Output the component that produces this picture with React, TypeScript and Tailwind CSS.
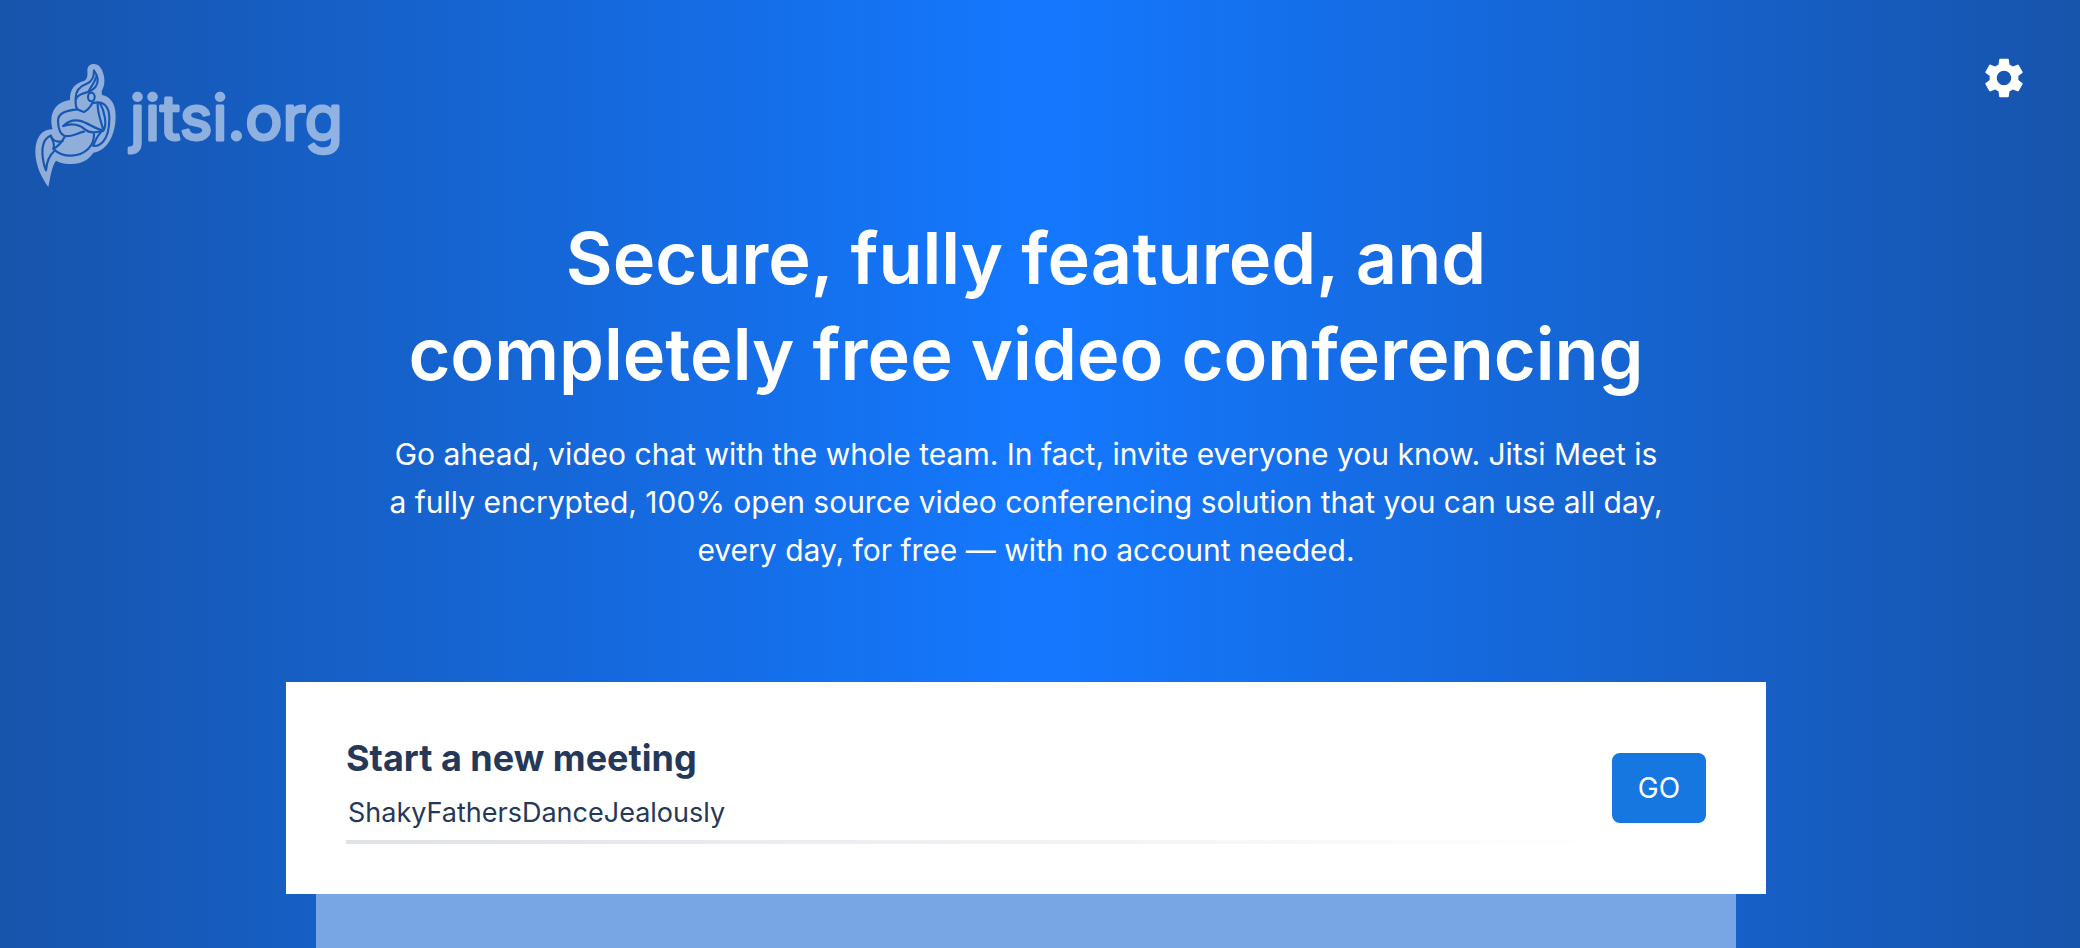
import React from "react";
import { MdSettings } from "react-icons/md";

function Logo() {
  return (
    <svg viewBox="0 0 328 128" className="h-32 w-82" role="img" aria-label="jitsi.org">
      <mask id="bird-lines" maskUnits="userSpaceOnUse" x="0" y="0" width="400" height="450">
        <rect width="400" height="450" fill="white" />
        <g fill="none" stroke="black" strokeWidth="6.5" strokeLinecap="round" strokeLinejoin="round">
          <path d="M222 62C222 84 216 94 200 101C180 108 167 120 167 145C167 160 165 171 173 178C179 182 186 184 192 186C204 181 210 172 217 160" />
          <path d="M222 62C235 80 236 97 227 110C220 121 206 126 191 130C179 134 171 140 168 147" />
          <path d="M228 82C224 100 214 106 206 124" />
          <ellipse cx="214" cy="141" rx="10" ry="13" />
          <path d="M217 160C250 149 268 170 268 205C268 240 262 262 249 275C240 284 228 289 219 287C226 276 228 258 250 240" />
          <path d="M173 178C140 181 113 188 114 214C115 240 120 253 134 258C152 262 170 250 192 245" />
          <path d="M130 228C145 213 160 209 177 212C204 217 224 238 250 241" />
          <path d="M130 228C155 218 182 224 196 239C207 249 230 250 250 241" />
          <path d="M233 161C232 190 244 215 250 241C262 225 254 184 240 160" />
          <path d="M222 252C223 286 198 314 155 317C132 318 112 308 100 296C116 288 126 276 134 260" />
          <path d="M92 257C69 266 65 290 68 320C70 336 73 350 78 361C80 336 88 316 103 303" />
          <path d="M92 257C98 272 112 278 128 273" />
          <path d="M94 262C102 278 104 288 100 296" />
        </g>
      </mask>
      <g opacity="0.52">
        <g transform="scale(0.3333) translate(-24 -30)">
          <path
            mask="url(#bird-lines)"
            fill="white"
            d="M222 42C209 42 202 50 202 62C203 76 203 86 192 93C164 100 149 118 150 150C112 155 94 180 94 212C94 222 95 230 98 238C66 236 46 264 46 305C47 350 65 382 85 411C91 385 94 350 108 332C122 340 140 342 155 342C185 341 206 330 220 308C258 302 286 262 287 200C287 158 270 140 246 135C246 130 244 126 246 121C254 108 255 90 251 75C245 52 236 42 222 42Z"
          />
        </g>
        <text
          x="102"
          y="80"
          fill="white"
          stroke="white"
          strokeWidth="3"
          strokeLinejoin="round"
          className="font-[Inter] text-[62px]"
        >
          jitsi.org
        </text>
      </g>
    </svg>
  );
}

export default function App() {
  return (
    <main className="flex min-h-screen flex-col bg-[linear-gradient(90deg,#1754ac_0%,#1478ff_50%,#1754ac_100%)] pr-7 font-[Inter,sans-serif] text-white">
      <header className="flex h-[210px] items-start justify-between pt-[54px] pr-6 pl-7">
        <a href="#home" className="pt-1.5">
          <Logo />
        </a>
        <button type="button" aria-label="Settings">
          <MdSettings className="size-12" />
        </button>
      </header>
      <section className="flex flex-col items-center text-center">
        <h1 className="text-[72px] leading-[96px] font-semibold">
          Secure, fully featured, and
          <br />
          completely free video conferencing
        </h1>
        <p className="mt-7 text-[30px] leading-12">
          Go ahead, video chat with the whole team. In fact, invite everyone you know. Jitsi Meet is
          <br />a fully encrypted, 100% open source video conferencing solution that you can use all day,
          <br />
          every day, for free — with no account needed.
        </p>
      </section>
      <form
        className="mx-auto mt-27 flex h-53 w-full max-w-[1480px] items-center justify-between bg-white px-15 text-[#253858]"
        onSubmit={(e) => e.preventDefault()}
      >
        <div className="flex flex-1 flex-col pt-1">
          <label htmlFor="room" className="text-4xl leading-11 font-bold">
            Start a new meeting
          </label>
          <input id="room" defaultValue="ShakyFathersDanceJealously" className="mt-2 h-12 px-0.5 text-[27px] outline-none" />
          <div className="mt-1 h-1 bg-linear-to-r from-[#dfe2e7] to-white" />
        </div>
        <button type="submit" className="h-[70px] w-[94px] rounded-lg bg-[#1577df] text-[28px] text-white">
          GO
        </button>
      </form>
      <div className="mx-auto w-full max-w-[1420px] flex-1 bg-[#78a6e4]" />
    </main>
  );
}
